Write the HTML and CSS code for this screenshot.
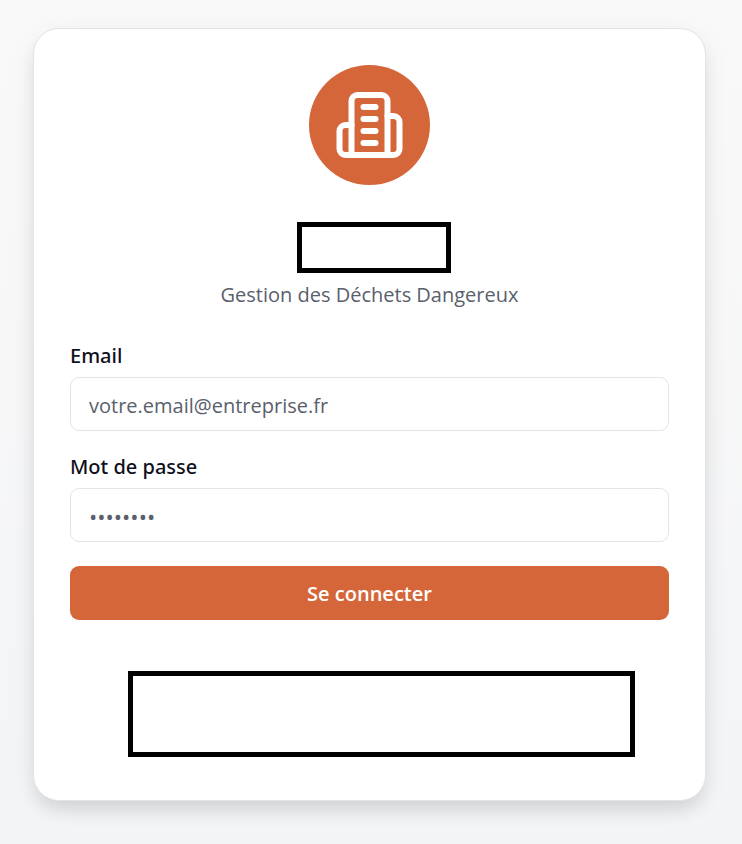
FILE: index.html
```html
<!DOCTYPE html>
<html lang="fr">
<head>
  <meta charset="utf-8">
  <meta name="viewport" content="width=device-width, initial-scale=1">
  <title>Connexion</title>
  <link rel="stylesheet" href="styles.css">
</head>
<body>

  <main class="card">
    <header class="card-header">
      <div class="logo">
        <svg class="logo-icon" viewBox="0 0 24 24" aria-hidden="true">
          <path d="M6 22V4a2 2 0 0 1 2-2h8a2 2 0 0 1 2 2v18Z"/>
          <path d="M6 12H4a2 2 0 0 0-2 2v6a2 2 0 0 0 2 2h2"/>
          <path d="M18 9h2a2 2 0 0 1 2 2v9a2 2 0 0 1-2 2h-2"/>
          <path d="M10 6h4"/>
          <path d="M10 10h4"/>
          <path d="M10 14h4"/>
          <path d="M10 18h4"/>
        </svg>
      </div>
      <div class="box box-name"></div>
      <p class="subtitle">Gestion des Déchets Dangereux</p>
    </header>

    <form class="login-form" action="#" method="post">
      <div class="field">
        <label for="id_email">Email</label>
        <input type="email" name="email" id="id_email" placeholder="votre.email@entreprise.fr" required>
      </div>
      <div class="field">
        <label for="id_password">Mot de passe</label>
        <input type="password" name="password" id="id_password" placeholder="••••••••" required>
      </div>
      <button type="submit" class="submit">Se connecter</button>
    </form>

    <div class="box box-info"></div>
  </main>

</body>
</html>
```

FILE: styles.css
```css
* {
  box-sizing: border-box;
}

body {
  margin: 0;
  min-height: 100vh;
  padding: 28px 36px 43px 33px;
  background: linear-gradient(to bottom, #f9f9f9, #f3f4f6);
  font: 20px/30px "Segoe UI", "Open Sans", "Noto Sans", sans-serif;
  color: #0f1020;
}

.card {
  max-width: 674px;
  margin: 0 auto;
  padding: 36px 36px 43px;
  background: #fff;
  border: 1px solid #e3e4e6;
  border-radius: 26px;
  box-shadow: 0 12px 18px -4px rgba(0, 0, 0, 0.1), 0 6px 28px -2px rgba(0, 0, 0, 0.07);
}

.card-header {
  display: flex;
  flex-direction: column;
  align-items: center;
}

.logo {
  display: flex;
  align-items: center;
  justify-content: center;
  width: 121px;
  height: 120px;
  margin-bottom: 37px;
  border-radius: 50%;
  background: #d5663a;
}

.logo-icon {
  width: 73px;
  height: 72px;
  fill: none;
  stroke: #fff;
  stroke-width: 2;
  stroke-linecap: round;
  stroke-linejoin: round;
}

.box {
  border: 5px solid #000;
}

.box-name {
  width: 154px;
  height: 51px;
  margin-left: 9px;
}

.subtitle {
  margin: 7px 0 34px;
  color: #5a606b;
}

.login-form {
  display: flex;
  flex-direction: column;
  gap: 24px;
}

.field {
  display: flex;
  flex-direction: column;
  gap: 10px;
}

label {
  font-family: "Segoe UI", "Noto Sans", sans-serif;
  font-weight: 500;
  line-height: 23px;
}

input {
  width: 100%;
  height: 54px;
  padding: 2px 18px 0;
  border: 1px solid #e3e4e6;
  border-radius: 9px;
  background: #fff;
  font: inherit;
  color: inherit;
}

input[type=password] {
  font-size: 22px;
}

input::placeholder {
  color: #5a606b;
  opacity: 1;
}

.submit {
  height: 54px;
  padding: 2px 18px 0;
  border: none;
  border-radius: 9px;
  background: #d5663a;
  color: #fff;
  font: inherit;
  font-weight: 600;
  cursor: pointer;
}

.box-info {
  height: 86px;
  margin: 51px 34px 0 58px;
}
```
